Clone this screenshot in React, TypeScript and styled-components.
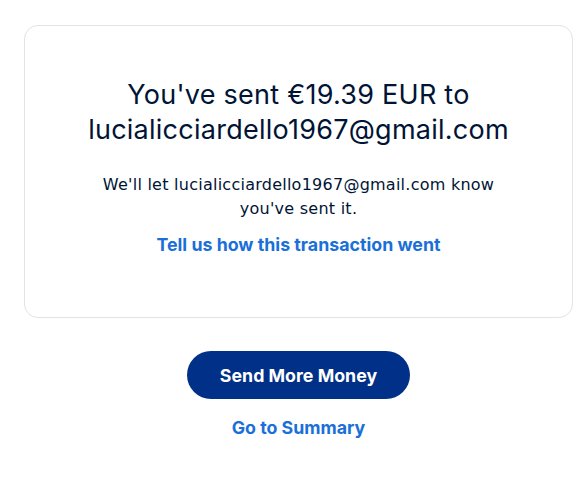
import React from "react";
import styled, { createGlobalStyle } from "styled-components";

const Global = createGlobalStyle`
  html, body { margin: 0; padding: 0; background: #ffffff; }
  body { font-family: Inter, "Liberation Sans", Arial, sans-serif; color: #001435; }
`;

const Page = styled.div`
  width: 588px;
  padding: 25px 15px 0 24px;
  box-sizing: border-box;
  display: flex;
  flex-direction: column;
  align-items: center;
`;

const Card = styled.section`
  width: 549px;
  height: 293px;
  box-sizing: border-box;
  border: 1px solid #e3e3e3;
  border-radius: 14px;
  padding: 51px 20px 0;
  display: flex;
  flex-direction: column;
  align-items: center;
  text-align: center;
`;

const Heading = styled.h1`
  margin: 0;
  font-size: 27px;
  font-weight: 400;
  letter-spacing: 0.25px;
  line-height: 35px;
  color: #001435;
`;

const Body = styled.p`
  margin: 26px 0 0;
  font-family: "DejaVu Sans", Inter, sans-serif;
  font-size: 16px;
  letter-spacing: 0.25px;
  line-height: 24px;
  color: #001435;
  max-width: 420px;
`;

const TextLink = styled.a`
  font-size: 17.8px;
  font-weight: 700;
  color: #1a6fd8;
  text-decoration: none;
  cursor: pointer;
`;

const FeedbackLink = styled(TextLink)`
  margin-top: 12px;
  line-height: 24px;
`;

const Actions = styled.div`
  margin-top: 33px;
  display: flex;
  flex-direction: column;
  align-items: center;
  gap: 18px;
`;

const PrimaryButton = styled.button`
  width: 223px;
  height: 48px;
  border: none;
  border-radius: 24px;
  background: #003087;
  color: #ffffff;
  font-family: inherit;
  font-size: 17.8px;
  font-weight: 700;
  cursor: pointer;
`;

export default function App() {
  return (
    <>
      <Global />
      <Page>
        <Card>
          <Heading>
            You've sent €19.39 EUR to
            <br />
            lucialicciardello1967@gmail.com
          </Heading>
          <Body>
            We'll let lucialicciardello1967@gmail.com know
            <br />
            you've sent it.
          </Body>
          <FeedbackLink>Tell us how this transaction went</FeedbackLink>
        </Card>
        <Actions>
          <PrimaryButton>Send More Money</PrimaryButton>
          <TextLink>Go to Summary</TextLink>
        </Actions>
      </Page>
    </>
  );
}
